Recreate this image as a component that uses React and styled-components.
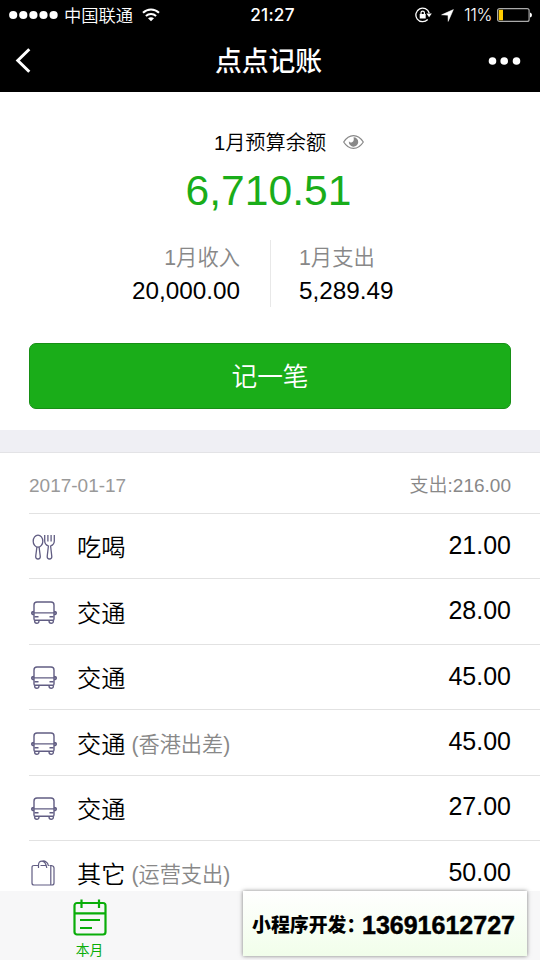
import React from 'react';
import styled, { createGlobalStyle } from 'styled-components';

const GlobalStyle = createGlobalStyle`
* { box-sizing: border-box; }
body {
  margin: 0;
  background: #fff;
  font-family: "Liberation Sans", "Noto Sans CJK SC", sans-serif;
}
`;

const Screen = styled.div`
position: relative;
display: flex;
flex-direction: column;
width: 540px;
height: 960px;
overflow: hidden;
background: #fff;
color: #000;
`;

const StatusBar = styled.div`
display: grid;
grid-template-columns: 1fr auto 1fr;
align-items: center;
height: 30px;
padding: 0 8px 0 9px;
background: #000;
color: #fff;
font-family: Inter, "Noto Sans CJK SC", sans-serif;
`;

const StatusGroup = styled.div`
display: flex;
align-items: center;
justify-content: ${props => props.$end ? 'flex-end' : 'flex-start'};
height: 30px;
`;

const Carrier = styled.span`
margin: 0 9px 0 6px;
font-size: 17.3px;
font-weight: 350;
line-height: 30px;
padding-top: 1px;
`;

const Clock = styled.span`
font-size: 17.2px;
font-weight: 500;
letter-spacing: 0.2px;
line-height: 30px;
margin-left: 4px;
`;

const Percent = styled.span`
margin: 0 5px 0 10px;
font-size: 17px;
font-weight: 300;
letter-spacing: -0.4px;
line-height: 30px;
`;

const NavBar = styled.div`
display: grid;
grid-template-columns: 1fr auto 1fr;
align-items: center;
height: 62px;
padding: 0 19px 0 15px;
background: #000;
color: #fff;
svg:last-child { justify-self: end; }
`;

const Title = styled.div`
padding: 2px 0 0 1px;
font-size: 26.8px;
font-weight: 500;
line-height: 60px;
`;

const Summary = styled.div`
display: flex;
flex-direction: column;
align-items: center;
height: 338px;
padding: 30px 29px 0;
`;

const BudgetLabel = styled.div`
display: flex;
align-items: center;
gap: 17px;
height: 40px;
margin-left: 38px;
font-size: 20.2px;
font-weight: 350;
line-height: 40px;
`;

const BudgetText = styled.span`
padding-top: 2px;
`;

const Balance = styled.div`
height: 60px;
margin-right: 3px;
color: #1aad19;
font-size: 42.6px;
line-height: 57px;
`;

const Stats = styled.div`
display: grid;
grid-template-columns: 242px 240px;
width: 100%;
height: 67px;
margin-top: 18px;
`;

const Stat = styled.div`
padding: 0 ${props => props.$left ? '30px 0 0' : '0 0 28px'};
text-align: ${props => props.$left ? 'right' : 'left'};
border-right: ${props => props.$left ? '1px solid #e8e8e8' : 'none'};
`;

const StatLabel = styled.div`
height: 34px;
color: #888;
font-size: 21.3px;
font-weight: 350;
line-height: 36px;
`;

const StatValue = styled.div`
height: 33px;
font-size: 24.3px;
line-height: 34px;
`;

const RecordButton = styled.button`
width: 482px;
height: 66px;
margin-top: 36px;
padding: 2px 0 0;
border: 1px solid #178f16;
border-radius: 7px;
background: #1aad19;
color: #fff;
font-family: inherit;
font-size: 25.7px;
font-weight: 350;
line-height: 62px;
`;

const Gap = styled.div`
flex: none;
height: 23px;
background: #efeff4;
border-bottom: 1px solid #e3e3e6;
`;

const List = styled.div`
padding-left: 29px;
`;

const DayHeader = styled.div`
display: flex;
justify-content: space-between;
height: 60px;
padding-right: 29px;
color: #999;
font-size: 19px;
font-weight: 350;
line-height: 65px;
`;

const DayTotal = styled.span`
color: #888;
`;

const Row = styled.div`
display: flex;
align-items: center;
height: 65.45px;
padding-right: 29px;
border-top: 1px solid #e2e2e2;
`;

const IconBox = styled.div`
display: flex;
width: 48px;
padding: 1px 0 0 2px;
`;

const Name = styled.span`
font-size: 24.2px;
font-weight: 350;
line-height: 61px;
padding-top: 3px;
`;

const Note = styled.span`
margin-left: 6px;
color: #888;
font-size: 21.2px;
font-weight: 350;
line-height: 60px;
padding-top: 4px;
`;

const Amount = styled.span`
margin-left: auto;
font-size: 25px;
line-height: 60px;
padding-bottom: 3px;
`;

const TabBar = styled.div`
position: absolute;
left: 0;
right: 0;
bottom: 0;
display: grid;
grid-template-columns: repeat(3, 1fr);
height: 69px;
background: #f7f7f8;
`;

const Tab = styled.div`
display: flex;
flex-direction: column;
align-items: center;
padding: 8px 1px 0 0;
color: #09ad09;
font-size: 13.8px;
line-height: 20px;
`;

const TabLabel = styled.span`
margin-top: 5px;
`;

const Banner = styled.div`
position: absolute;
left: 243px;
top: 891px;
display: flex;
align-items: center;
width: 284px;
height: 65px;
padding-left: 9px;
background: linear-gradient(#fff, #f1feea);
box-shadow: 0 0 4px rgba(0, 0, 0, 0.5);
white-space: nowrap;
font-weight: 900;
`;

const BannerText = styled.span`
width: 110px;
font-size: 18.9px;
line-height: 62px;
padding-top: 5px;
`;

const Phone = styled.span`
font-size: 25px;
line-height: 62px;
padding-top: 3px;
-webkit-text-stroke: 0.5px #000;
`;

const Signal = () => (
  <svg width="49" height="10" viewBox="0 0 49 10" fill="#fff">
    {[4.2, 14.3, 24.4, 34.5, 44.6].map(x => <circle key={x} cx={x} cy="5" r="4.1" />)}
  </svg>
);

const Wifi = () => (
  <svg width="18" height="14" viewBox="0 0 18 14" fill="none" stroke="#fff" strokeWidth="2">
    <path d="M1 4.8C5.5 .3 12.5 .3 17 4.8M3.9 7.9C6.8 5.2 11.2 5.2 14.1 7.9" />
    <path d="M9 13.3L6 10.3Q9 8 12 10.3Z" fill="#fff" stroke="none" />
  </svg>
);

const RotationLock = () => (
  <svg width="17" height="16" viewBox="0 0 17 16" fill="none" stroke="#fff">
    <path d="M14.2 6A6.8 6.8 0 1 0 12.7 12.5" strokeWidth="1.3" />
    <path d="M11.4 6.6h5.4l-2.7 3.6Z" fill="#fff" stroke="none" />
    <path d="M4.7 7h6v4.5h-6Z" fill="#fff" stroke="none" />
    <path d="M6 7.3V5.8a1.7 1.7 0 0 1 3.4 0v1.5" strokeWidth="1.2" />
  </svg>
);

const LocationIcon = styled.svg`
margin-left: 9px;
`;

const Location = () => (
  <LocationIcon width="13" height="13" viewBox="0 0 13 13">
    <path d="M12.4 .6L7.2 12.4L7 6.2L.6 5.8Z" fill="#fff" stroke="#fff" strokeWidth=".5" />
  </LocationIcon>
);

const Battery = () => (
  <svg width="35" height="14" viewBox="0 0 35 14">
    <rect x=".6" y=".6" width="31.5" height="12.8" rx="2" fill="none" stroke="#aaa" strokeWidth="1.2" />
    <rect x="1.8" y="1.8" width="4.2" height="10.4" fill="#ffcc00" />
    <path d="M33 4.5q2 .5 2 2.5t-2 2.5Z" fill="#fff" />
  </svg>
);

const Back = () => (
  <svg width="16" height="26" viewBox="0 0 16 26" fill="none" stroke="#fff" strokeWidth="3">
    <path d="M14.3 1.2L2.8 12.5L14.3 23.8" />
  </svg>
);

const More = () => (
  <svg width="33" height="8" viewBox="0 0 33 8" fill="#fff">
    <circle cx="4.5" cy="4" r="3.8" />
    <circle cx="16.2" cy="4" r="3.8" />
    <circle cx="28.5" cy="4" r="3.8" />
  </svg>
);

const Eye = () => (
  <svg width="21" height="16" viewBox="0 0 21 16" fill="none" stroke="#888">
    <path d="M.7 8C6 -.6 15 -.6 20.3 8C15 16.6 6 16.6 .7 8Z" strokeWidth="1.2" />
    <path d="M10.5 3.3A4.7 4.7 0 1 1 5.9 7.2Q7 9 9 8.2Q11.6 7 10.5 3.3Z" fill="#888" stroke="none" />
  </svg>
);

const Food = () => (
  <svg width="26" height="26" viewBox="0 0 26 26" fill="none" stroke="#615d83" strokeWidth="1.3">
    <ellipse cx="7" cy="7.2" rx="4.8" ry="6" />
    <path d="M5.9 13L4.7 22.5Q4.7 25 7 25T9.3 22.5L8.1 13" />
    <path d="M13.7 1V7Q13.7 10.5 17.4 12L16.2 22.5Q16.2 25 18.5 25T20.8 22.5L19.6 12Q23.3 10.5 23.3 7V1M16.9 1V7.5M20.1 1V7.5" />
  </svg>
);

const Bus = () => (
  <svg width="26" height="23" viewBox="0 0 26 23" fill="none" stroke="#615d83" strokeWidth="1.4">
    <path d="M3 12V4Q3 1 6 1H20Q23 1 23 4V12M3 12V18Q3 19.2 4.2 19.2H21.8Q23 19.2 23 18V12M1 11.9H25" />
    <path d="M3 10.4Q.7 10.4 .7 12T3 13.6M23 10.4Q25.3 10.4 25.3 12T23 13.6" />
    <path d="M3.5 15.8H7.5M18.5 15.8H22.5M3.7 19.2V20.5Q3.7 22.2 5.8 22.2T7.9 20.5V19.2M18.1 19.2V20.5Q18.1 22.2 20.2 22.2T22.3 20.5V19.2" />
  </svg>
);

const Bag = () => (
  <svg width="24" height="27" viewBox="0 0 24 27" fill="none" stroke="#615d83" strokeWidth="1.2">
    <path d="M7 5.5H3Q1 5.5 1 7.5V23Q1 25 3 25H21Q23 25 23 23V8Q23 6 20.5 5.5H18.5M9.5 5.5H15M19.8 6V25" />
    <path d="M7.5 8V5Q7.5 1.2 11 1.2T15.8 8M11 1.2Q13 .5 14.6 1.4Q17.2 2.8 17.5 6" />
  </svg>
);

const Calendar = () => (
  <svg width="34" height="37" viewBox="0 0 34 37" fill="none" stroke="#09ad09" strokeWidth="2.2">
    <rect x="1.5" y="4" width="31" height="31.5" rx="2.5" />
    <path d="M1.5 14.3H32.5M8.5 .5V9M26 .5V9" />
    <path d="M7 21H27M7 29H19" />
  </svg>
);

const records = [
  { icon: Food, name: '吃喝', amount: '21.00' },
  { icon: Bus, name: '交通', amount: '28.00' },
  { icon: Bus, name: '交通', amount: '45.00' },
  { icon: Bus, name: '交通', note: '(香港出差)', amount: '45.00' },
  { icon: Bus, name: '交通', amount: '27.00' },
  { icon: Bag, name: '其它', note: '(运营支出)', amount: '50.00' },
];

const App = function () {
  return (
    <Screen>
      <GlobalStyle />
      <StatusBar>
        <StatusGroup><Signal /><Carrier>中国联通</Carrier><Wifi /></StatusGroup>
        <Clock>21:27</Clock>
        <StatusGroup $end><RotationLock /><Location /><Percent>11%</Percent><Battery /></StatusGroup>
      </StatusBar>
      <NavBar>
        <Back />
        <Title>点点记账</Title>
        <More />
      </NavBar>
      <Summary>
        <BudgetLabel><BudgetText>1月预算余额</BudgetText><Eye /></BudgetLabel>
        <Balance>6,710.51</Balance>
        <Stats>
          <Stat $left>
            <StatLabel>1月收入</StatLabel>
            <StatValue>20,000.00</StatValue>
          </Stat>
          <Stat>
            <StatLabel>1月支出</StatLabel>
            <StatValue>5,289.49</StatValue>
          </Stat>
        </Stats>
        <RecordButton>记一笔</RecordButton>
      </Summary>
      <Gap />
      <List>
        <DayHeader><span>2017-01-17</span><DayTotal>支出:216.00</DayTotal></DayHeader>
        {records.map((record, i) => {
          const Icon = record.icon;
          return (
            <Row key={i}>
              <IconBox><Icon /></IconBox>
              <Name>{record.name}</Name>
              {record.note && <Note>{record.note}</Note>}
              <Amount>{record.amount}</Amount>
            </Row>
          )
        })}
      </List>
      <TabBar>
        <Tab><Calendar /><TabLabel>本月</TabLabel></Tab>
      </TabBar>
      <Banner>
        <BannerText>小程序开发：</BannerText>
        <Phone>13691612727</Phone>
      </Banner>
    </Screen>
  )
}

export default App;
